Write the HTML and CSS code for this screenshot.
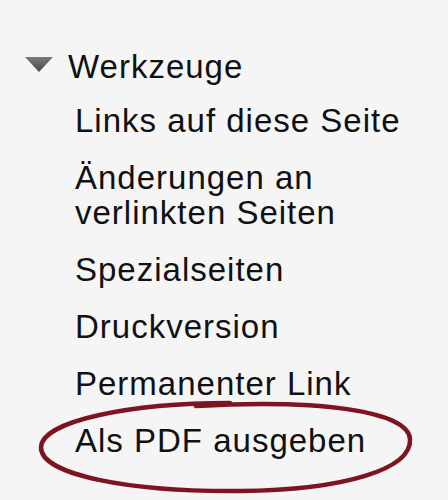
FILE: index.html
```html
<!DOCTYPE html>
<html lang="de">
<head>
<meta charset="utf-8">
<title>Werkzeuge</title>
<link rel="stylesheet" href="styles.css">
</head>
<body>
<div class="portal">
  <h3 class="portal-head">
    <svg class="arrow" width="28" height="15" viewBox="0 0 28 15">
      <defs>
        <linearGradient id="ag" x1="0" y1="0" x2="0" y2="1">
          <stop offset="0" stop-color="#7a7a7a"/>
          <stop offset="1" stop-color="#4a4a4a"/>
        </linearGradient>
      </defs>
      <polygon points="0,0 28,0 14,15" fill="url(#ag)"/>
    </svg>
    <span>Werkzeuge</span>
  </h3>
  <ul class="portal-list">
    <li>Links auf diese Seite</li>
    <li>Änderungen an<br>verlinkten Seiten</li>
    <li>Spezialseiten</li>
    <li>Druckversion</li>
    <li>Permanenter Link</li>
    <li class="marked">Als PDF ausgeben</li>
  </ul>
  <svg class="circle" width="448" height="120" viewBox="0 0 448 120">
    <path d="M230 12 C 130 12, 42 30, 41 56 C 40 84, 130 101, 240 100 C 345 99, 412 78, 410 48 C 408 20, 320 8, 196 15" fill="none" stroke="#7e1420" stroke-width="4.5" stroke-linecap="round"/>
  </svg>
</div>
</body>
</html>
```
FILE: styles.css
```css
html, body {
  margin: 0;
  padding: 0;
  background: #f5f5f5;
}
body {
  width: 448px;
  height: 500px;
  overflow: hidden;
  font-family: "Liberation Sans", Arial, sans-serif;
  color: #111;
}
.portal {
  position: relative;
  padding: 49px 0 0 25px;
}
.portal-head {
  margin: 0;
  display: flex;
  align-items: center;
  gap: 15px;
  font-size: 33px;
  line-height: 35px;
  font-weight: normal;
  letter-spacing: 1px;
  color: #111;
}
.arrow {
  display: block;
  margin-top: -4px;
}
.portal-list {
  list-style: none;
  margin: 19px 0 0;
  padding: 0 0 0 50px;
  font-size: 33px;
  line-height: 35px;
  letter-spacing: 1px;
}
.portal-list li {
  margin: 0 0 22px;
}
.circle {
  position: absolute;
  left: 0;
  top: 391px;
}
```
